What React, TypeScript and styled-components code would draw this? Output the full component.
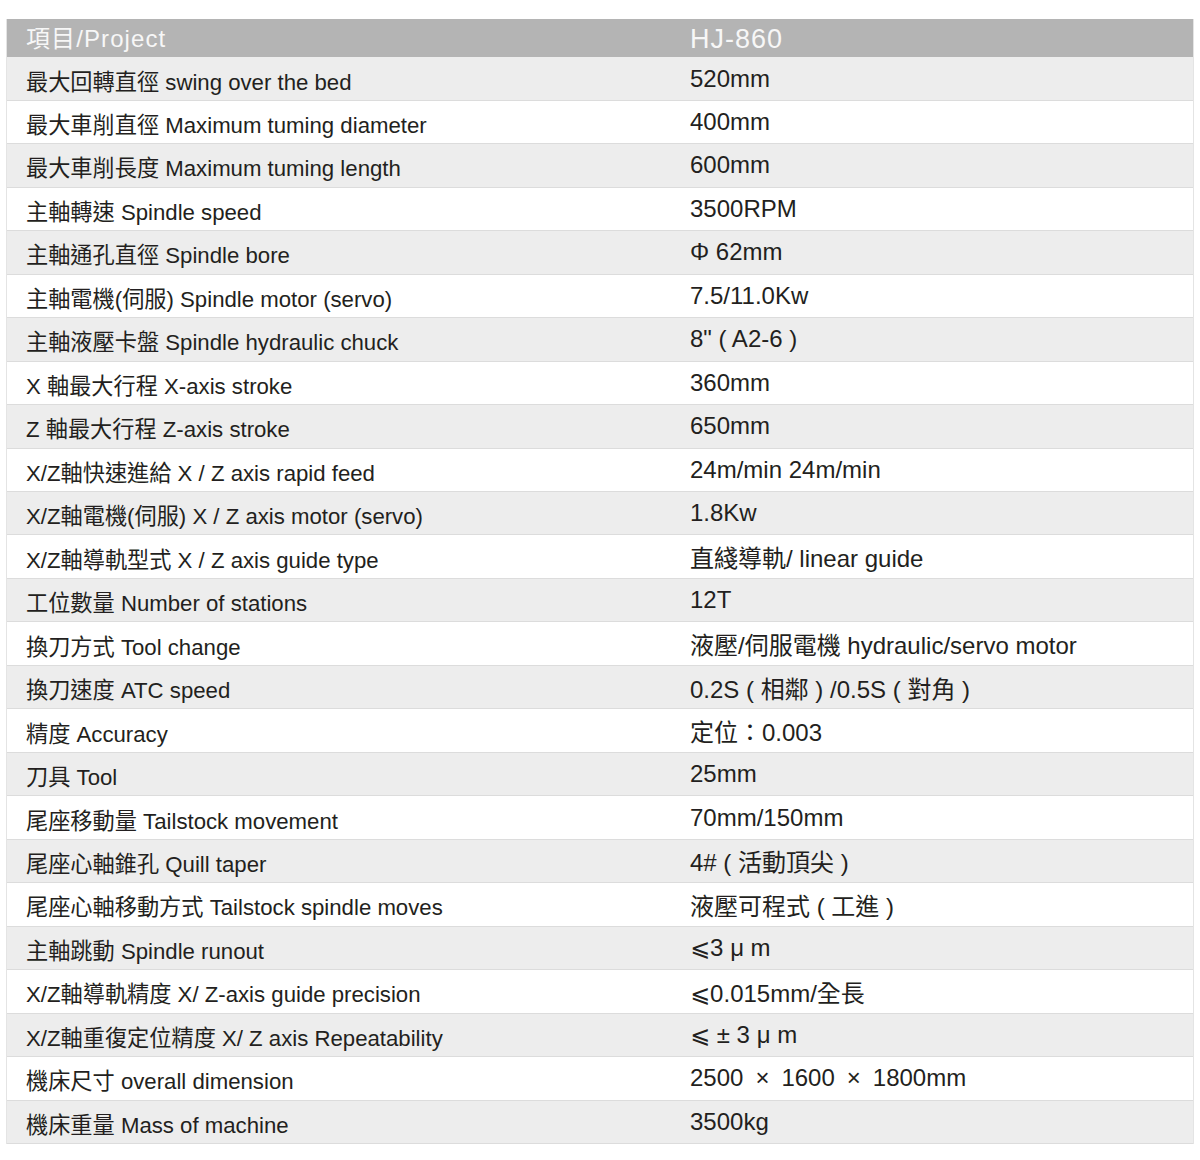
import React from 'react';
import styled, { createGlobalStyle } from 'styled-components';

const GlobalStyle = createGlobalStyle`
  html, body {
    margin: 0;
    padding: 0;
    background: #fff;
  }
  body {
    font-family: 'Liberation Sans', Arial, 'Noto Sans CJK TC', sans-serif;
    color: #231f20;
  }
`;

interface Spec {
  label: string;
  value: string;
}

const specs: Spec[] = [
  { label: '最大回轉直徑 swing over the bed', value: '520mm' },
  { label: '最大車削直徑 Maximum tuming diameter', value: '400mm' },
  { label: '最大車削長度 Maximum tuming length', value: '600mm' },
  { label: '主軸轉速 Spindle speed', value: '3500RPM' },
  { label: '主軸通孔直徑 Spindle bore', value: 'Φ 62mm' },
  { label: '主軸電機(伺服) Spindle motor (servo)', value: '7.5/11.0Kw' },
  { label: '主軸液壓卡盤 Spindle hydraulic chuck', value: '8" ( A2-6 )' },
  { label: 'X 軸最大行程 X-axis stroke', value: '360mm' },
  { label: 'Z 軸最大行程 Z-axis stroke', value: '650mm' },
  { label: 'X/Z軸快速進給 X / Z axis rapid feed', value: '24m/min 24m/min' },
  { label: 'X/Z軸電機(伺服) X / Z axis motor (servo)', value: '1.8Kw' },
  { label: 'X/Z軸導軌型式 X / Z axis guide type', value: '直綫導軌/ linear guide' },
  { label: '工位數量 Number of stations', value: '12T' },
  { label: '換刀方式 Tool change', value: '液壓/伺服電機 hydraulic/servo motor' },
  { label: '換刀速度 ATC speed', value: '0.2S ( 相鄰 ) /0.5S ( 對角 )' },
  { label: '精度 Accuracy', value: '定位：0.003' },
  { label: '刀具 Tool', value: '25mm' },
  { label: '尾座移動量 Tailstock movement', value: '70mm/150mm' },
  { label: '尾座心軸錐孔 Quill taper', value: '4# ( 活動頂尖 )' },
  { label: '尾座心軸移動方式 Tailstock spindle moves', value: '液壓可程式 ( 工進 )' },
  { label: '主軸跳動 Spindle runout', value: '⩽3 μ m' },
  { label: 'X/Z軸導軌精度 X/ Z-axis guide precision', value: '⩽0.015mm/全長' },
  { label: 'X/Z軸重復定位精度 X/ Z axis Repeatability', value: '⩽ ± 3 μ m' },
  { label: '機床尺寸 overall dimension', value: '2500\u2002×\u20021600\u2002×\u20021800mm' },
  { label: '機床重量 Mass of machine', value: '3500kg' },
];

const Page = styled.div`
  padding: 19px 6px 16px;
`;

const SpecTable = styled.div`
  display: flex;
  flex-direction: column;
  border-left: 1px solid #e4e4e4;
  border-right: 1px solid #e4e4e4;
`;

const HeaderRow = styled.div`
  display: grid;
  grid-template-columns: 663px 1fr;
  align-items: center;
  height: 38.3px;
  background: #b4b4b4;
  color: #f7f7f7;
`;

const HeaderLabel = styled.div`
  padding-left: 19px;
  padding-bottom: 4px;
  font-size: 24px;
  letter-spacing: 1.1px;
`;

const HeaderModel = styled.div`
  padding-left: 20px;
  font-size: 27px;
  letter-spacing: 1px;
  padding-top: 2px;
`;

const Row = styled.div<{ $shaded: boolean }>`
  display: grid;
  grid-template-columns: 663px 1fr;
  align-items: center;
  height: 43.47px;
  box-sizing: border-box;
  border-bottom: 1px solid #dcdcdc;
  background: ${(p) => (p.$shaded ? '#ededed' : '#ffffff')};
`;

const Label = styled.div`
  padding-left: 19px;
  padding-top: 2px;
  font-size: 22.2px;
  white-space: nowrap;
`;

const Value = styled.div`
  padding-left: 20px;
  font-size: 24px;
  white-space: nowrap;
  font-family: 'Liberation Sans', Arial, 'Noto Sans CJK TC', 'DejaVu Sans', sans-serif;
`;

const App = () => {
  return (
    <Page>
      <GlobalStyle />
      <SpecTable>
        <HeaderRow>
          <HeaderLabel>項目/Project</HeaderLabel>
          <HeaderModel>HJ-860</HeaderModel>
        </HeaderRow>
        {specs.map((spec, i) => (
          <Row key={spec.label} $shaded={i % 2 === 0}>
            <Label>{spec.label}</Label>
            <Value>{spec.value}</Value>
          </Row>
        ))}
      </SpecTable>
    </Page>
  );
};

export default App;
